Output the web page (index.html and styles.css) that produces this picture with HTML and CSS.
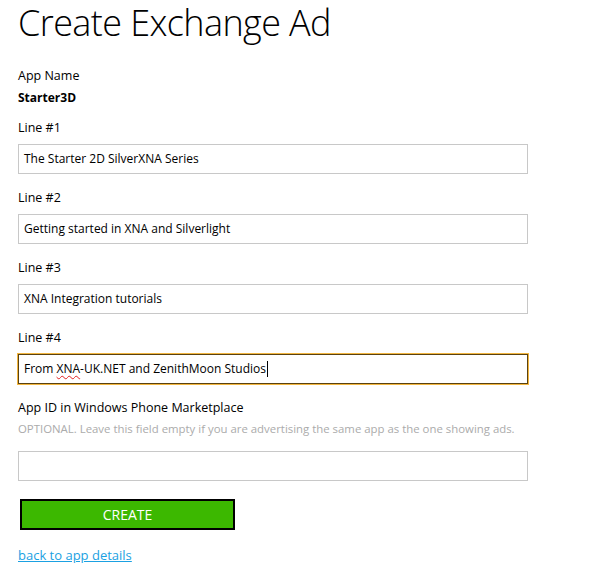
FILE: index.html
```html
<!DOCTYPE html>
<html>
<head>
<meta charset="utf-8">
<link rel="stylesheet" href="styles.css">
</head>
<body>
<div class="page">
  <h1 class="title">Create Exchange Ad</h1>
  <div class="appname">
    <div class="label">App Name</div>
    <div class="value">Starter3D</div>
  </div>
  <div class="field first">
    <div class="label">Line #1</div>
    <div class="input">The Starter 2D SilverXNA Series</div>
  </div>
  <div class="field">
    <div class="label">Line #2</div>
    <div class="input">Getting started in XNA and Silverlight</div>
  </div>
  <div class="field">
    <div class="label">Line #3</div>
    <div class="input">XNA Integration tutorials</div>
  </div>
  <div class="field">
    <div class="label">Line #4</div>
    <div class="input focused">From <span class="spell">XNA</span>-UK.NET and ZenithMoon Studios<span class="caret"></span></div>
  </div>
  <div class="field appid">
    <div class="label">App ID in Windows Phone Marketplace</div>
    <div class="hint">OPTIONAL. Leave this field empty if you are advertising the same app as the one showing ads.</div>
    <div class="input"></div>
  </div>
  <div class="actions">
    <button class="btn">CREATE</button>
  </div>
  <a class="back" href="#">back to app details</a>
</div>
</body>
</html>
```

FILE: styles.css
```css
html, body {
  margin: 0;
  padding: 0;
  background: #fff;
}
body {
  font-family: "Open Sans", "Noto Sans", sans-serif;
  font-size: 12px;
  color: #000;
}
.page {
  padding: 0 0 0 18px;
  width: 510px;
}
.title {
  margin: 0;
  padding: 0;
  font-family: "Open Sans", sans-serif;
  font-weight: 300;
  font-size: 36px;
  line-height: 46px;
  letter-spacing: -0.6px;
  color: #000;
}
.appname {
  margin-top: 20px;
}
.label {
  line-height: 20px;
  height: 20px;
  font-size: 12.5px;
}
.value {
  font-weight: 700;
  line-height: 20px;
  margin-top: 2px;
}
.field {
  margin-top: 14px;
}
.field.first {
  margin-top: 10px;
}
.field .label {
  margin-bottom: 6px;
}
.input {
  box-sizing: border-box;
  height: 30px;
  width: 510px;
  border: 1px solid #c8c8c8;
  padding: 0 5px;
  line-height: 28px;
  white-space: nowrap;
}
.focused {
  border-color: #5b4210;
  box-shadow: 0 0 0 1px #f2b640;
}
.spell {
  text-decoration: underline wavy #e02020;
  text-decoration-thickness: 1px;
  text-underline-offset: 2px;
}
.caret {
  display: inline-block;
  width: 1px;
  height: 16px;
  background: #000;
  margin-left: 1px;
  vertical-align: -4px;
}
.appid .label {
  margin-bottom: 1px;
}
.hint {
  color: #ababab;
  line-height: 20px;
  margin-bottom: 12px;
  white-space: nowrap;
  font-size: 11.4px;
}
.actions {
  margin-top: 18px;
  padding-left: 2px;
}
.btn {
  box-sizing: border-box;
  width: 215px;
  height: 31px;
  border: 2px solid #000;
  background: #3cb800;
  color: #fff;
  font-family: "Open Sans", sans-serif;
  font-size: 14px;
  font-weight: 400;
  padding: 0;
  margin: 0;
  display: block;
}
.back {
  display: inline-block;
  margin-top: 15px;
  color: #1ba1e2;
  text-decoration: underline;
  line-height: 20px;
  font-size: 13px;
}
```
